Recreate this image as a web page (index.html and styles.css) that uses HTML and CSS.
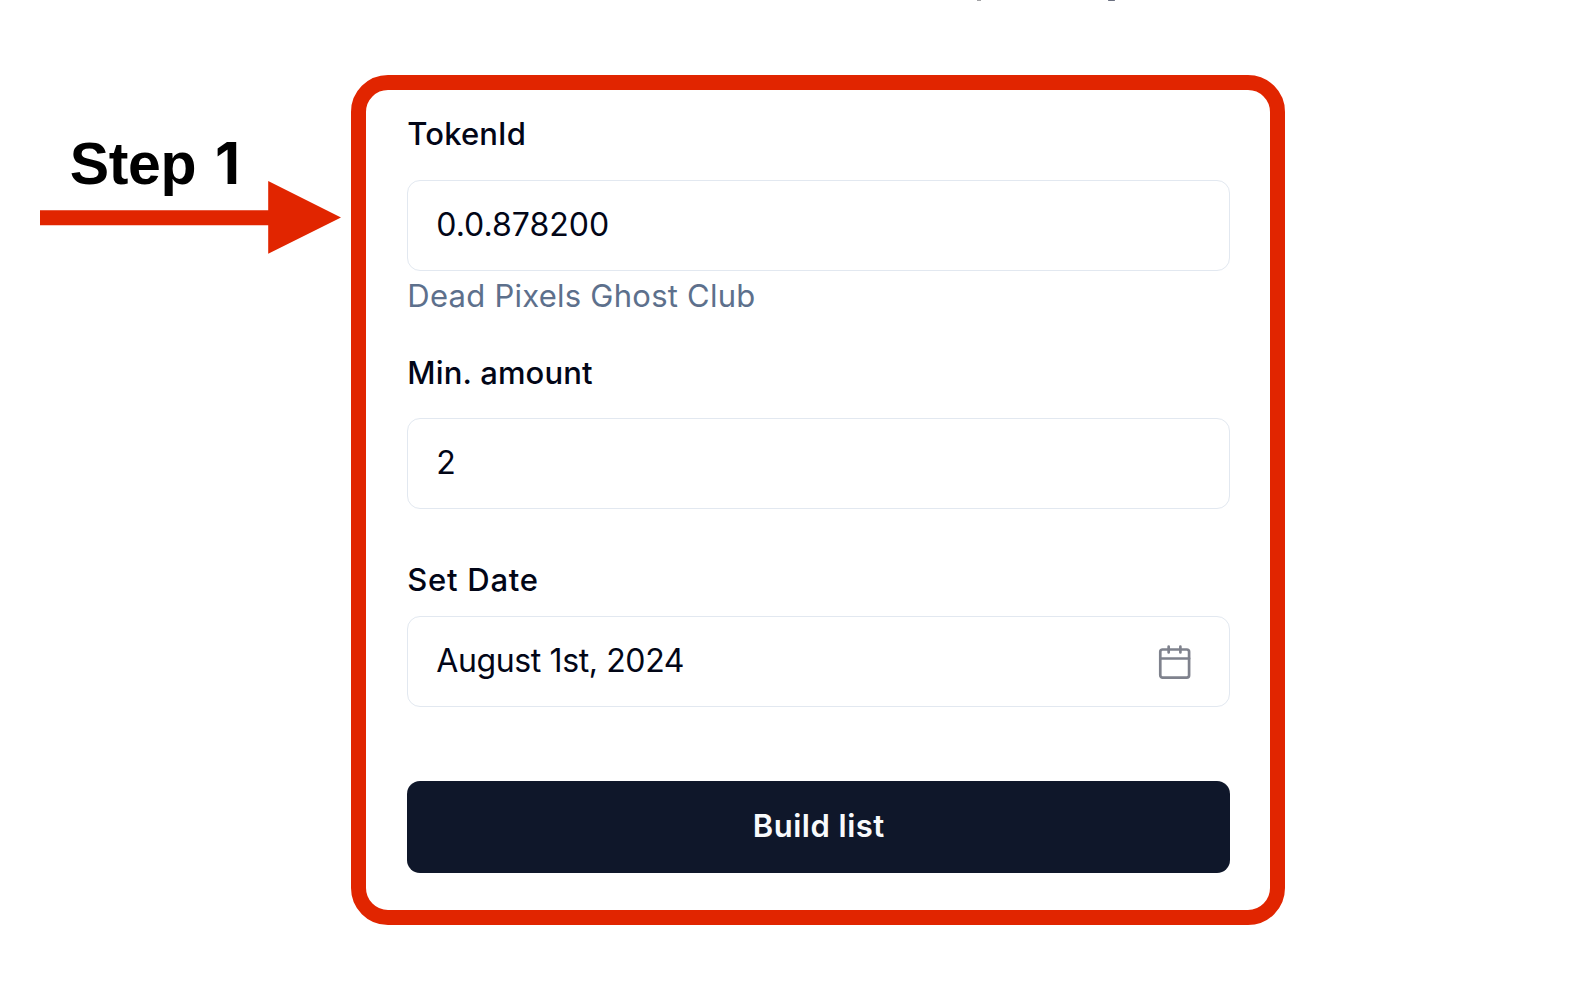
FILE: index.html
```html
<!DOCTYPE html>
<html lang="en">
<head>
<meta charset="utf-8">
<title>Build list</title>
<link rel="stylesheet" href="styles.css">
</head>
<body>
<div class="cutoff"><i class="tail tail-p"></i><i class="tail tail-g"></i></div>
<main class="page">
  <aside class="step">
    <div class="step-title">Step <span class="step-number">1</span></div>
    <svg class="arrow" width="302" height="74" viewBox="0 0 302 74"><path d="M0 29.3H228.2V0L301 36.4L228.2 72.8V44.2H0Z" fill="#e12500"/></svg>
  </aside>
  <form class="card">
    <label class="label l-token">TokenId</label>
    <div class="field"><span>0.0.878200</span></div>
    <p class="hint"><span>Dead Pixels Ghost Club</span></p>
    <label class="label l-min">Min. amount</label>
    <div class="field"><span>2</span></div>
    <label class="label l-date">Set Date</label>
    <div class="field date"><span class="v-date">August 1st, 2024</span>
      <svg class="calendar" width="38" height="38" viewBox="0 0 24 24" fill="none" stroke="#7f828d" stroke-width="1.7" stroke-linecap="round" stroke-linejoin="round"><rect x="2.7" y="4.1" width="18.2" height="17.8" rx="1.5"/><path d="M8 2.3V6M15.4 2.3V6M2.7 9.8H20.9"/></svg>
    </div>
    <button class="build" type="button"><span>Build list</span></button>
  </form>
</main>
</body>
</html>
```
FILE: styles.css
```css
* { box-sizing: border-box; }
body { margin: 0; width: 1580px; height: 994px; overflow: hidden; background: #fff; color: #020617; font-family: Inter, "Liberation Sans", sans-serif; }
.cutoff { display: flex; height: 1px; padding-left: 977px; }
.tail { height: 1px; }
.tail-p { width: 4px; background: #a3a3a6; }
.tail-g { width: 7px; margin-left: 127px; background: #6b7080; border-radius: 1px; }
.page { display: flex; align-items: flex-start; padding-top: 74px; }
.step { width: 351.3px; padding: 56px 0 0 39.8px; }
.step-title { height: 50px; padding-left: 30px; font: bold 59px/66px "Liberation Sans", Arial, sans-serif; color: #000; letter-spacing: -0.4px; white-space: nowrap; }
.step-number { margin-left: 3px; font-family: Inter, sans-serif; font-size: 58px; line-height: 1; }
.arrow { display: block; }
.card { width: 934px; height: 850px; border: 15px solid #e12500; border-radius: 37px; padding: 24px 40px 0 41px; display: flex; flex-direction: column; }
.label { display: block; height: 40px; font-size: 31px; line-height: 40px; font-weight: 500; color: #020617; letter-spacing: 0.15px; white-space: nowrap; }
.l-token { margin-bottom: 26px; }
.field { height: 91px; flex: none; display: flex; align-items: center; padding: 0 35px 1px 28px; border: 1px solid #e2e8f0; border-radius: 13px; font-size: 32px; line-height: 40px; white-space: nowrap; }
.hint { margin: 5px 0 37px; height: 40px; font-size: 31px; line-height: 40px; color: #5d708c; letter-spacing: 0.25px; white-space: nowrap; }
.l-min { margin-bottom: 25px; }
.l-date { margin: 51px 0 16px; letter-spacing: 0.75px; }
.date { justify-content: space-between; }
.v-date { letter-spacing: -0.38px; }
.calendar { position: relative; top: 1px; }
.build { height: 92px; flex: none; margin-top: 74px; padding: 0 0 2px; border: 0; border-radius: 13px; background: #0f172a; color: #f8fafc; font: 600 31px/40px Inter, sans-serif; letter-spacing: 0.5px; }
```
